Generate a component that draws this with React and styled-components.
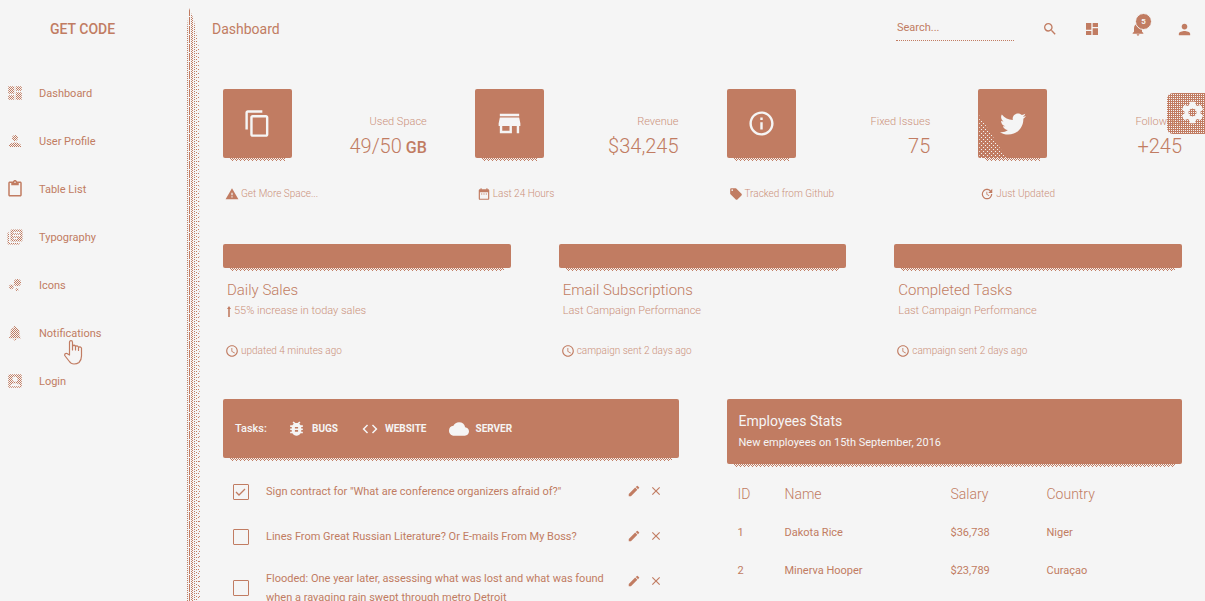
import React from "react";
import styled, { createGlobalStyle, css } from "styled-components";
import {
  MdDashboard, MdPerson, MdContentPaste, MdLibraryBooks, MdBubbleChart,
  MdNotifications, MdAccountBox, MdContentCopy, MdStore, MdInfoOutline,
  MdWarning, MdDateRange, MdLocalOffer, MdUpdate, MdAccessTime, MdBugReport,
  MdCode, MdCloud, MdEdit, MdClose, MdSearch, MdSettings,
} from "react-icons/md";
import { FaTwitter } from "react-icons/fa";

const clay = "#c17c62";
const paper = "#f5f5f5";
const faint = "#cb917b";

// Builds a small repeating tile from single dots, given as [x, y] pairs.
const tile = (w, h, color, dots) => {
  const path = dots.map(([x, y]) => `M${x} ${y}h1v1h-1z`).join("");
  const svg = `<svg xmlns='http://www.w3.org/2000/svg' width='${w}' height='${h}' shape-rendering='crispEdges'><path fill='${color}' d='${path}'/></svg>`;
  return `url("data:image/svg+xml,${encodeURIComponent(svg).replace(/'/g, "%27")}")`;
};

const checker = tile(2, 2, clay, [[0, 0], [1, 1]]);
const dense = tile(2, 2, clay, [[0, 0], [1, 1], [1, 0]]);
const halftone = tile(4, 4, paper, [[0, 0], [2, 2]]);
const underline = tile(4, 3, clay, [[0, 0], [2, 0], [1, 1], [3, 1], [2, 2]]);

const Global = createGlobalStyle`
  *, *::before, *::after { box-sizing: border-box; }
  body { margin: 0; background: ${paper}; color: ${clay}; font-family: Roboto, "Liberation Sans", sans-serif; font-size: 12px; }
  h1, h2, p, ul { margin: 0; padding: 0; }
  ul { list-style: none; }
  a { color: inherit; text-decoration: none; }
  button, input { font: inherit; color: inherit; }
  svg { display: block; flex: none; }
`;

const Shell = styled.div`
  display: flex;
  height: 100vh;
  overflow: hidden;
`;

const Sidebar = styled.aside`
  position: relative;
  flex: none;
  width: 187px;
  &::after {
    content: "";
    position: absolute;
    top: 8px;
    bottom: 0;
    left: 100%;
    width: 13px;
    background:
      linear-gradient(${clay} 50%, transparent 0) 0 0 / 1px 2px repeat-y,
      linear-gradient(${clay} 88%, transparent 0) 2px 0 / 1px 9px repeat-y,
      linear-gradient(${clay} 50%, transparent 0) 4px 1px / 1px 2px repeat-y,
      linear-gradient(${clay} 50%, transparent 0) 5px 0 / 1px 2px repeat-y,
      linear-gradient(${clay} 50%, transparent 0) 7px 1px / 1px 2px repeat-y,
      linear-gradient(${clay} 33%, transparent 0) 9px 0 / 1px 3px repeat-y,
      linear-gradient(${clay} 25%, transparent 0) 11px 1px / 1px 4px repeat-y,
      linear-gradient(${clay} 20%, transparent 0) 12px 3px / 1px 5px repeat-y;
    clip-path: polygon(0 20px, 2px 0, 7px 12px, 12px 40px, 13px 100%, 0 100%);
  }
`;

const Brand = styled.a`
  display: flex;
  height: 58px;
  margin-bottom: 11px;
  padding-left: 50px;
  align-items: center;
  font-size: 14px;
  font-weight: 500;
`;

const NavLink = styled.a`
  display: flex;
  align-items: center;
  gap: 15px;
  height: 48px;
  padding-left: 6px;
  font-size: 11px;
  svg {
    width: 18px;
    height: 18px;
    mask: ${({ $outline }) => ($outline ? "none" : checker)};
  }
`;

const Pointer = styled.svg`
  position: absolute;
  left: 64px;
  top: 340px;
  pointer-events: none;
`;

const Main = styled.main`
  flex: 1;
  min-width: 0;
`;

const Topbar = styled.header`
  display: flex;
  align-items: center;
  height: 58px;
  margin-bottom: 31px;
  padding-left: 25px;
`;

const PageTitle = styled.h1`
  flex: 1;
  font-size: 14px;
  font-weight: 400;
`;

const SearchForm = styled.form`
  display: flex;
  align-items: center;
  gap: 15px;
`;

const SearchBox = styled.input`
  width: 118px;
  height: 24px;
  padding: 0 1px 2px;
  border: 0;
  border-bottom: 1px dotted ${clay};
  background: none;
  outline: 0;
  font-size: 11px;
  &::placeholder { color: ${clay}; opacity: 1; }
`;

const IconButton = styled.button`
  position: relative;
  display: grid;
  place-items: center;
  width: ${({ $w }) => $w || 42}px;
  height: ${({ $h }) => $h || 42}px;
  padding: 0;
  border: 0;
  background: none;
  cursor: pointer;
`;

const TopActions = styled.div`
  display: flex;
  gap: 4px;
`;

const Badge = styled.span`
  position: absolute;
  top: 5px;
  right: 7px;
  width: 15px;
  height: 15px;
  border: 1px solid ${paper};
  border-radius: 50%;
  box-sizing: content-box;
  background: ${clay};
  color: ${paper};
  font-size: 8px;
  font-weight: 700;
  line-height: 15px;
  text-align: center;
`;

const Content = styled.div`
  padding: 0 23px 0 36px;
`;

const Grid = styled.section`
  display: grid;
  grid-template-columns: repeat(${({ $cols }) => $cols}, minmax(0, 1fr));
  column-gap: 48px;
  min-height: 155px;
`;

const shade = css`
  position: relative;
  background: ${clay};
  color: ${paper};
  border-radius: 2px;
  &::after {
    content: "";
    position: absolute;
    top: 100%;
    left: 7px;
    right: 7px;
    height: 3px;
    background: ${underline};
  }
`;

const StatTop = styled.div`
  display: flex;
  justify-content: space-between;
  height: 69px;
`;

const StatIcon = styled.div`
  ${shade}
  display: grid;
  place-items: center;
  width: 69px;
  height: 69px;
  ${({ $halftone }) => $halftone && css`
    &::before {
      content: "";
      position: absolute;
      left: 1px;
      bottom: 0;
      width: 27px;
      height: 43px;
      background: ${halftone};
      clip-path: polygon(0 0, 100% 100%, 0 100%);
    }
  `}
`;

const StatText = styled.div`
  padding-top: 26px;
  text-align: right;
  white-space: nowrap;
  font-weight: 300;
`;

const StatLabel = styled.p`
  color: ${faint};
  font-size: 11px;
  line-height: 14px;
`;

const StatValue = styled.p`
  font-size: 20px;
  line-height: 34px;
  small { font-size: 16px; font-weight: 500; }
`;

const Meta = styled.p`
  display: flex;
  align-items: center;
  gap: 2px;
  padding-left: 2px;
  color: ${faint};
  font-size: 10px;
  font-weight: 300;
  line-height: 14px;
  svg { color: ${clay}; }
`;

const StatMeta = styled(Meta)`
  margin-top: 29px;
`;

const ChartBar = styled.div`
  ${shade}
  height: 24px;
`;

const ChartTitle = styled.h2`
  margin: 13px 0 4px;
  padding-left: 4px;
  font-size: 15px;
  font-weight: 300;
  line-height: 18px;
`;

const ChartNote = styled.p`
  display: flex;
  align-items: center;
  gap: 3px;
  margin-bottom: 25px;
  padding-left: 4px;
  color: ${faint};
  font-size: 11px;
  font-weight: 300;
  line-height: 16px;
`;

const TaskHead = styled.header`
  ${shade}
  display: flex;
  align-items: center;
  height: 59px;
  margin-bottom: 11px;
  padding-left: 12px;
`;

const TaskLabel = styled.span`
  width: 52px;
  font-size: 11px;
  font-weight: 500;
`;

const TaskTab = styled.button`
  display: flex;
  align-items: center;
  gap: 6px;
  margin-right: 23px;
  padding: 0;
  border: 0;
  background: none;
  font-size: 10px;
  font-weight: 700;
`;

const TaskRow = styled.li`
  display: flex;
  padding: 0 12px 0 10px;
`;

const TaskText = styled.label`
  display: flex;
  flex: 1;
  align-items: center;
  gap: 17px;
  min-height: 45px;
  padding: 10px 12px 10px 0;
  font-size: 11px;
  line-height: 19px;
`;

const Check = styled.input`
  flex: none;
  appearance: none;
  width: 16px;
  height: 16px;
  margin: 0;
  border: 1px solid ${clay};
  border-radius: 1px;
  &:checked {
    background: url("data:image/svg+xml,%3Csvg xmlns='http://www.w3.org/2000/svg' viewBox='0 0 14 14'%3E%3Cpath d='M2 7l3 3 6-6' fill='none' stroke='%23c17c62' stroke-width='1.3'/%3E%3C/svg%3E");
  }
`;

const StaffHead = styled.header`
  ${shade}
  height: 65px;
  margin-bottom: 11px;
  padding: 13px 12px;
  h2 { font-size: 14px; font-weight: 400; line-height: 18px; }
  p { font-size: 11px; line-height: 25px; }
`;

const StaffTable = styled.table`
  width: 100%;
  border-collapse: collapse;
  table-layout: fixed;
  th, td { height: 38px; padding: 0 0 0 11px; text-align: left; }
  th { font-size: 14px; font-weight: 300; }
  td { font-size: 11px; }
  th:nth-child(1) { width: 47px; }
  th:nth-child(2) { width: 166px; }
  th:nth-child(3) { width: 96px; }
`;

const SettingsButton = styled.button`
  position: fixed;
  top: 93px;
  right: 0;
  width: 38px;
  height: 41px;
  padding: 0 0 2px 12px;
  border: 0;
  border-radius: 6px 0 0 6px;
  color: ${paper};
  background: ${dense} 0 0 / 2px 2px, ${checker};
`;

const nav = [
  ["Dashboard", MdDashboard],
  ["User Profile", MdPerson],
  ["Table List", MdContentPaste, true],
  ["Typography", MdLibraryBooks],
  ["Icons", MdBubbleChart],
  ["Notifications", MdNotifications],
  ["Login", MdAccountBox],
];

const stats = [
  { label: "Used Space", value: "49/50", unit: "GB", Icon: MdContentCopy, note: "Get More Space...", NoteIcon: MdWarning },
  { label: "Revenue", value: "$34,245", Icon: MdStore, note: "Last 24 Hours", NoteIcon: MdDateRange },
  { label: "Fixed Issues", value: "75", Icon: MdInfoOutline, note: "Tracked from Github", NoteIcon: MdLocalOffer },
  { label: "Followers", value: "+245", Icon: FaTwitter, note: "Just Updated", NoteIcon: MdUpdate, dotted: true },
];

const charts = [
  { title: "Daily Sales", note: "55% increase in today sales", up: true, time: "updated 4 minutes ago" },
  { title: "Email Subscriptions", note: "Last Campaign Performance", time: "campaign sent 2 days ago" },
  { title: "Completed Tasks", note: "Last Campaign Performance", time: "campaign sent 2 days ago" },
];

const tabs = [
  ["BUGS", MdBugReport, 19],
  ["WEBSITE", MdCode, 18],
  ["SERVER", MdCloud, 20],
];

const tasks = [
  ["Sign contract for \"What are conference organizers afraid of?\"", true],
  ["Lines From Great Russian Literature? Or E-mails From My Boss?", false],
  ["Flooded: One year later, assessing what was lost and what was found when a ravaging rain swept through metro Detroit", false],
];

const staff = [
  ["1", "Dakota Rice", "$36,738", "Niger"],
  ["2", "Minerva Hooper", "$23,789", "Curaçao"],
];

const UpArrow = () => (
  <svg width="4" height="11" viewBox="0 0 4 11" fill={clay} aria-hidden="true">
    <path d="M2 0L4 3H2.800V11H1.200V3H0Z" />
  </svg>
);

export default function App() {
  return (
    <Shell>
      <Global />
      <Sidebar>
        <Brand href="#">GET CODE</Brand>
        <nav>
          {nav.map(([name, Icon, outline]) => (
            <NavLink href="#" key={name} $outline={outline}><Icon />{name}</NavLink>
          ))}
        </nav>
        <Pointer width="19" height="25" viewBox="0 0 19 25" fill={paper} stroke={clay} strokeWidth="1.2" strokeLinejoin="round">
          <path d="M5.5 15V2.5Q5.5.7 7 .7T8.500 2.500V10V6Q10 4.500 11.500 6V10V6.500Q13 5 14.500 7V10.500V7.500Q16 6 17.500 8V16Q17.500 20 15 22.500Q13 24 10 24Q7 24 5 21L.7 15.500Q.5 13 3 13.500Z" />
        </Pointer>
      </Sidebar>
      <Main>
        <Topbar>
          <PageTitle>Dashboard</PageTitle>
          <SearchForm role="search">
            <SearchBox aria-label="Search" placeholder="Search..." />
            <IconButton type="button" aria-label="Search"><MdSearch size={16} /></IconButton>
          </SearchForm>
          <TopActions>
            <IconButton aria-label="Overview"><MdDashboard size={16} /></IconButton>
            <IconButton aria-label="Notifications"><MdNotifications size={16} /><Badge>5</Badge></IconButton>
            <IconButton aria-label="Account"><MdPerson size={17} /></IconButton>
          </TopActions>
        </Topbar>
        <Content>
          <Grid $cols={4}>
            {stats.map(({ label, value, unit, Icon, note, NoteIcon, dotted }) => (
              <article key={label}>
                <StatTop>
                  <StatIcon $halftone={dotted}><Icon size={dotted ? 26 : 29} /></StatIcon>
                  <StatText>
                    <StatLabel>{label}</StatLabel>
                    <StatValue>{value}{unit && <small> {unit}</small>}</StatValue>
                  </StatText>
                </StatTop>
                <StatMeta><NoteIcon size={14} />{note}</StatMeta>
              </article>
            ))}
          </Grid>
          <Grid $cols={3}>
            {charts.map(({ title, note, up, time }) => (
              <article key={title}>
                <ChartBar />
                <ChartTitle>{title}</ChartTitle>
                <ChartNote>{up && <UpArrow />}{note}</ChartNote>
                <Meta><MdAccessTime size={14} />{time}</Meta>
              </article>
            ))}
          </Grid>
          <Grid $cols={2}>
            <article>
              <TaskHead>
                <TaskLabel>Tasks:</TaskLabel>
                {tabs.map(([name, Icon, size]) => (
                  <TaskTab key={name}><Icon size={size} />{name}</TaskTab>
                ))}
              </TaskHead>
              <ul>
                {tasks.map(([text, done]) => (
                  <TaskRow key={text}>
                    <TaskText><Check type="checkbox" defaultChecked={done} />{text}</TaskText>
                    <IconButton $w={22} $h={43} aria-label="Edit task"><MdEdit size={14} /></IconButton>
                    <IconButton $w={22} $h={43} aria-label="Remove task"><MdClose size={14} /></IconButton>
                  </TaskRow>
                ))}
              </ul>
            </article>
            <article>
              <StaffHead>
                <h2>Employees Stats</h2>
                <p>New employees on 15th September, 2016</p>
              </StaffHead>
              <StaffTable>
                <thead>
                  <tr><th>ID</th><th>Name</th><th>Salary</th><th>Country</th></tr>
                </thead>
                <tbody>
                  {staff.map((row) => (
                    <tr key={row[0]}>{row.map((cell) => <td key={cell}>{cell}</td>)}</tr>
                  ))}
                </tbody>
              </StaffTable>
            </article>
          </Grid>
        </Content>
      </Main>
      <SettingsButton aria-label="Settings"><MdSettings size={27} /></SettingsButton>
    </Shell>
  );
}
